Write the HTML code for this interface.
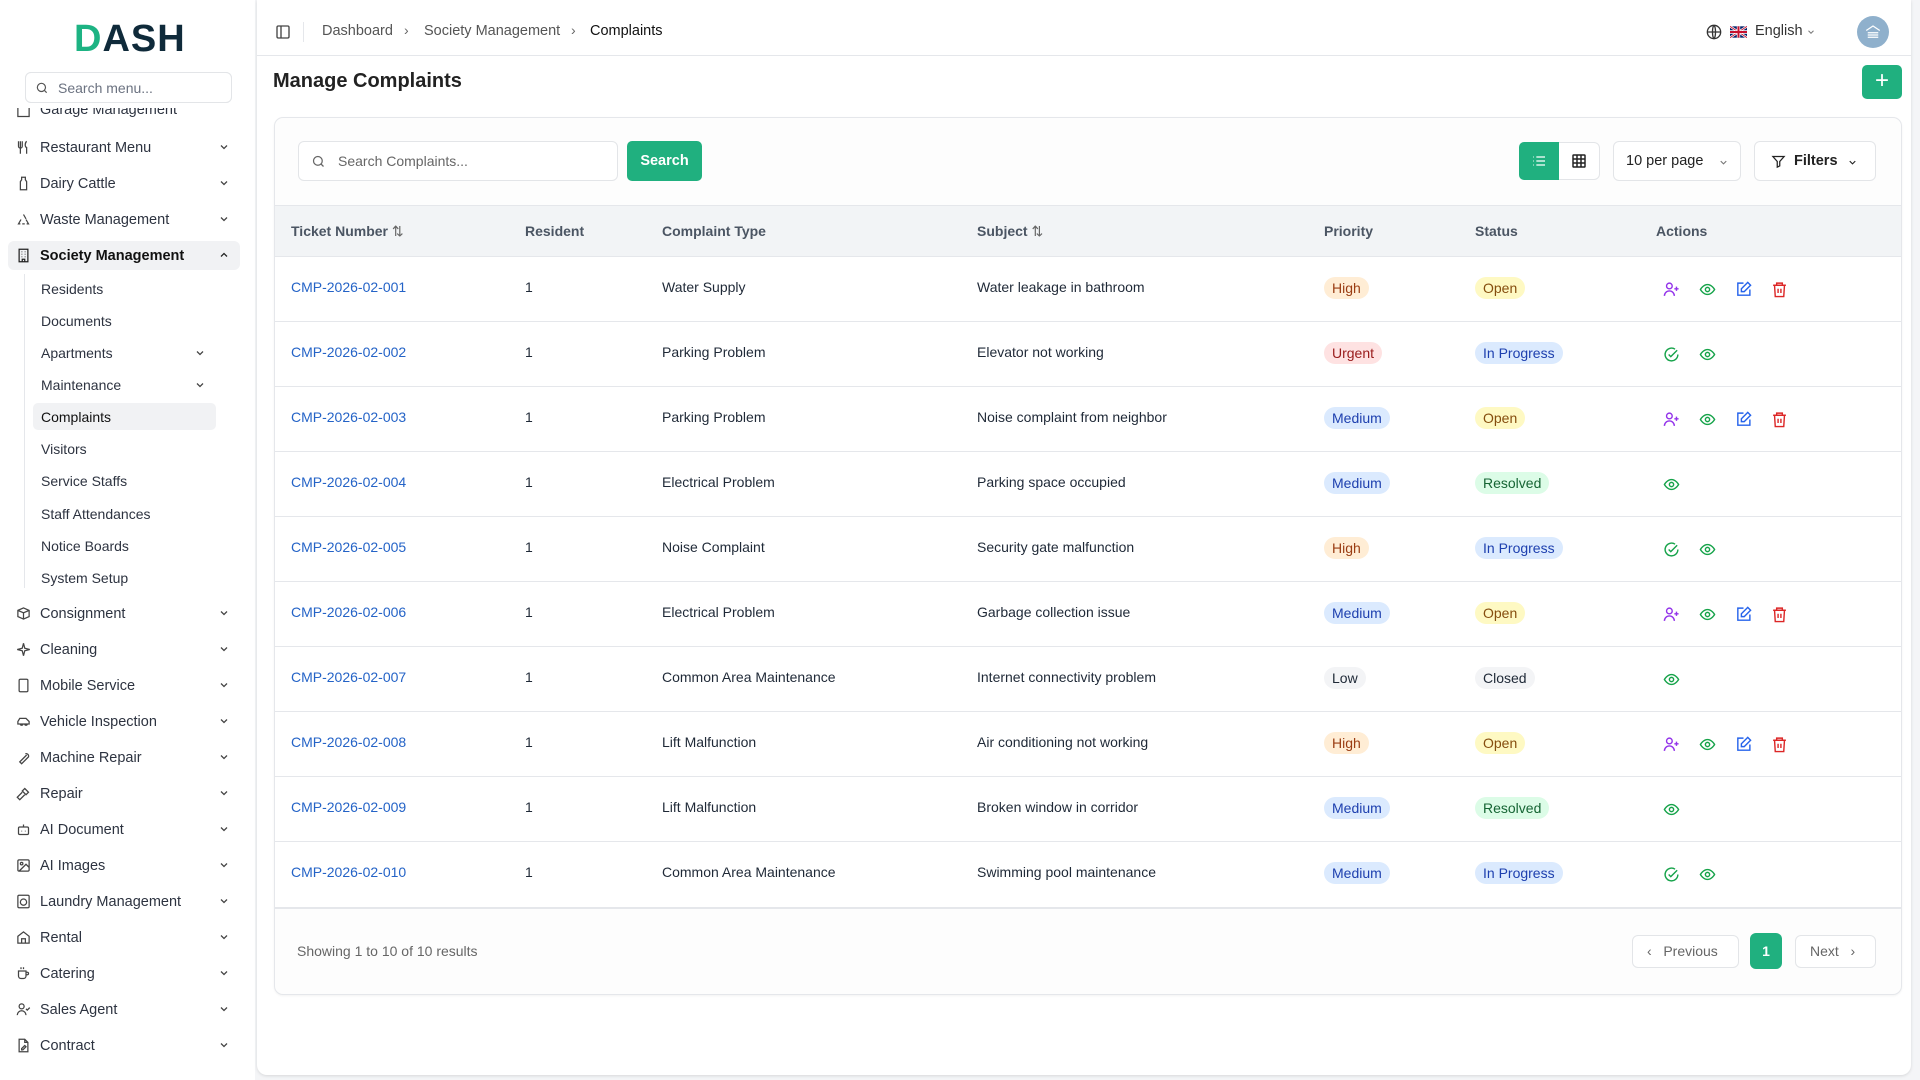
<!DOCTYPE html>
<html><head><meta charset="utf-8">
<style>
*{box-sizing:border-box;margin:0;padding:0}
body{width:1920px;height:1080px;overflow:hidden;background:#f4f5f7;font-family:"Liberation Sans",sans-serif;color:#1f2937;position:relative;font-size:14px}
.abs{position:absolute}
#side{left:0;top:0;width:255px;height:1080px;background:#fff}
.logo{left:74px;top:18px;font-size:38px;font-weight:700;letter-spacing:1px;color:#0f2a3a}
.logo span{color:#1db383}
.msearch{left:25px;top:72px;width:207px;height:31px;border:1px solid #e3e5e8;border-radius:6px;background:#fff}
.msearch .t{position:absolute;left:32px;top:7px;color:#6b7280;font-size:14px}
.item{position:absolute;left:0;width:240px;height:28px;font-size:14.5px;color:#2d3340}
.item .ic{position:absolute;left:16px;top:6px;width:15px;height:15px}
.item .tx{position:absolute;left:40px;top:6px}
.item .ch{position:absolute;left:218px;top:7px;width:12px;height:12px}
.sub{position:absolute;left:41px;font-size:14px;color:#2d3340}
#main{left:257px;top:0;width:1654px;height:1075px;background:#fff;border-radius:0 0 10px 10px;box-shadow:0 1px 3px rgba(0,0,0,.12)}
.hdr{left:257px;top:55px;width:1654px;height:1px;background:#e5e7eb}
.card{left:274px;top:117px;width:1628px;height:878px;border:1px solid #e5e7eb;border-radius:9px;background:#fdfdfd;box-shadow:0 1px 2px rgba(0,0,0,.05)}
.btn{position:absolute;border:1px solid #e3e5e8;border-radius:6px;background:#fff}
.th{position:absolute;top:223px;font-weight:700;color:#4b5563;font-size:14px}
.row{position:absolute;left:275px;width:1626px;height:65px;border-top:1px solid #e5e7eb;background:#fff}
.row div{position:absolute;top:22px;font-size:14px}
.link{color:#2463c7}
.bd{padding:3px 8px;border-radius:12px;font-size:14px;top:20px !important}
.hi{background:#ffedd5;color:#9a3c12}.ur{background:#fee2e2;color:#991b1b}.me{background:#dbeafe;color:#1e40af}.lo{background:#f3f4f6;color:#1f2937}
.op{background:#fef9c3;color:#854d0e}.ip{background:#dbeafe;color:#1e40af}.rs{background:#dcfce7;color:#166534}.cl{background:#f3f4f6;color:#1f2937}
.row svg{position:absolute;top:24px}
</style></head><body>
<div id="side" class="abs">
<div class="abs logo"><span>D</span>ASH</div>
<div class="abs msearch"><svg style="position:absolute;left:9px;top:8px" width="14" height="14" viewBox="0 0 24 24" fill="none" stroke="#555" stroke-width="2"><circle cx="11" cy="11" r="7"/><path d="M20 20l-4-4"/></svg><span class="t">Search menu...</span></div>
<div style="position:absolute;left:0;top:104px;width:255px;height:976px;overflow:hidden">
</div>
</div>

<!-- sidebar items -->
<div class="item" style="top:98px;height:20px;overflow:hidden"><svg class="ic" viewBox="0 0 24 24" fill="none" stroke="#444" stroke-width="2"><rect x="3" y="4" width="18" height="16"/></svg><span class="tx" style="top:4px">Garage Management</span></div>
<div class="abs" style="left:0;top:104px;width:255px;height:4px;background:#fff"></div>
<div class="abs msearch" style="top:72px;z-index:2"><svg style="position:absolute;left:9px;top:8px" width="14" height="14" viewBox="0 0 24 24" fill="none" stroke="#555" stroke-width="2"><circle cx="11" cy="11" r="7"/><path d="M20 20l-4-4"/></svg><span class="t">Search menu...</span></div>

<div class="item" style="top:134px"><svg class="ic" viewBox="0 0 24 24" fill="none" stroke="#444" stroke-width="2"><path d="M4 2v8a3 3 0 006 0V2M7 2v20M17 2c-3 3-3 9 0 10v10"/></svg><span class="tx">Restaurant Menu</span><svg class="ch" viewBox="0 0 24 24" fill="none" stroke="#444" stroke-width="2.5"><path d="M6 9l6 6 6-6"/></svg></div>
<div class="item" style="top:170px"><svg class="ic" viewBox="0 0 24 24" fill="none" stroke="#444" stroke-width="2"><path d="M9 2h6v4l2 3v13H7V9l2-3z"/></svg><span class="tx">Dairy Cattle</span><svg class="ch" viewBox="0 0 24 24" fill="none" stroke="#444" stroke-width="2.5"><path d="M6 9l6 6 6-6"/></svg></div>
<div class="item" style="top:206px"><svg class="ic" viewBox="0 0 24 24" fill="none" stroke="#444" stroke-width="2"><path d="M7 19H4l4-7M12 4l4 7M17 19h3l-4-7M10 19h4"/></svg><span class="tx">Waste Management</span><svg class="ch" viewBox="0 0 24 24" fill="none" stroke="#444" stroke-width="2.5"><path d="M6 9l6 6 6-6"/></svg></div>
<div class="abs" style="left:8px;top:241px;width:232px;height:29px;background:#f1f2f4;border-radius:6px"></div>
<div class="item" style="top:242px;font-weight:700;color:#111"><svg class="ic" viewBox="0 0 24 24" fill="none" stroke="#222" stroke-width="2"><rect x="5" y="2" width="14" height="20"/><path d="M9 6h1M14 6h1M9 10h1M14 10h1M9 14h1M14 14h1M10 22v-4h4v4"/></svg><span class="tx">Society Management</span><svg class="ch" viewBox="0 0 24 24" fill="none" stroke="#222" stroke-width="2.5"><path d="M6 15l6-6 6 6"/></svg></div>
<div class="abs" style="left:24px;top:274px;width:1px;height:314px;background:#e5e7eb"></div>
<div class="sub" style="top:281px">Residents</div>
<div class="sub" style="top:313px">Documents</div>
<div class="sub" style="top:345px">Apartments</div><svg class="abs" style="left:194px;top:347px" width="12" height="12" viewBox="0 0 24 24" fill="none" stroke="#444" stroke-width="2.5"><path d="M6 9l6 6 6-6"/></svg>
<div class="sub" style="top:377px">Maintenance</div><svg class="abs" style="left:194px;top:379px" width="12" height="12" viewBox="0 0 24 24" fill="none" stroke="#444" stroke-width="2.5"><path d="M6 9l6 6 6-6"/></svg>
<div class="abs" style="left:33px;top:403px;width:183px;height:27px;background:#f1f2f4;border-radius:5px"></div>
<div class="sub" style="top:409px;color:#111">Complaints</div>
<div class="sub" style="top:441px">Visitors</div>
<div class="sub" style="top:473px">Service Staffs</div>
<div class="sub" style="top:506px">Staff Attendances</div>
<div class="sub" style="top:538px">Notice Boards</div>
<div class="sub" style="top:570px">System Setup</div>

<div class="item" style="top:600px"><svg class="ic" viewBox="0 0 24 24" fill="none" stroke="#444" stroke-width="2"><path d="M3 7l9-4 9 4v10l-9 4-9-4z M3 7l9 4 9-4M12 11v10"/></svg><span class="tx">Consignment</span><svg class="ch" viewBox="0 0 24 24" fill="none" stroke="#444" stroke-width="2.5"><path d="M6 9l6 6 6-6"/></svg></div>
<div class="item" style="top:636px"><svg class="ic" viewBox="0 0 24 24" fill="none" stroke="#444" stroke-width="2"><path d="M12 2l2 8 8 2-8 2-2 8-2-8-8-2 8-2z"/></svg><span class="tx">Cleaning</span><svg class="ch" viewBox="0 0 24 24" fill="none" stroke="#444" stroke-width="2.5"><path d="M6 9l6 6 6-6"/></svg></div>
<div class="item" style="top:672px"><svg class="ic" viewBox="0 0 24 24" fill="none" stroke="#444" stroke-width="2"><rect x="5" y="2" width="14" height="20" rx="2"/></svg><span class="tx">Mobile Service</span><svg class="ch" viewBox="0 0 24 24" fill="none" stroke="#444" stroke-width="2.5"><path d="M6 9l6 6 6-6"/></svg></div>
<div class="item" style="top:708px"><svg class="ic" viewBox="0 0 24 24" fill="none" stroke="#444" stroke-width="2"><path d="M3 16v-4l3-5h10l5 5v4zM7 16a2 2 0 004 0M14 16a2 2 0 004 0"/></svg><span class="tx">Vehicle Inspection</span><svg class="ch" viewBox="0 0 24 24" fill="none" stroke="#444" stroke-width="2.5"><path d="M6 9l6 6 6-6"/></svg></div>
<div class="item" style="top:744px"><svg class="ic" viewBox="0 0 24 24" fill="none" stroke="#444" stroke-width="2"><path d="M15 6a4 4 0 015 5l-11 11-3-3L17 8"/></svg><span class="tx">Machine Repair</span><svg class="ch" viewBox="0 0 24 24" fill="none" stroke="#444" stroke-width="2.5"><path d="M6 9l6 6 6-6"/></svg></div>
<div class="item" style="top:780px"><svg class="ic" viewBox="0 0 24 24" fill="none" stroke="#444" stroke-width="2"><path d="M14 4l6 6-4 4-6-6zM10 10l-8 8 4 4 8-8"/></svg><span class="tx">Repair</span><svg class="ch" viewBox="0 0 24 24" fill="none" stroke="#444" stroke-width="2.5"><path d="M6 9l6 6 6-6"/></svg></div>
<div class="item" style="top:816px"><svg class="ic" viewBox="0 0 24 24" fill="none" stroke="#444" stroke-width="2"><rect x="4" y="8" width="16" height="12" rx="2"/><path d="M12 4v4M9 14v1M15 14v1"/></svg><span class="tx">AI Document</span><svg class="ch" viewBox="0 0 24 24" fill="none" stroke="#444" stroke-width="2.5"><path d="M6 9l6 6 6-6"/></svg></div>
<div class="item" style="top:852px"><svg class="ic" viewBox="0 0 24 24" fill="none" stroke="#444" stroke-width="2"><rect x="3" y="3" width="18" height="18" rx="2"/><circle cx="9" cy="9" r="2"/><path d="M21 15l-5-5L5 21"/></svg><span class="tx">AI Images</span><svg class="ch" viewBox="0 0 24 24" fill="none" stroke="#444" stroke-width="2.5"><path d="M6 9l6 6 6-6"/></svg></div>
<div class="item" style="top:888px"><svg class="ic" viewBox="0 0 24 24" fill="none" stroke="#444" stroke-width="2"><rect x="3" y="2" width="18" height="20" rx="2"/><circle cx="12" cy="13" r="5"/></svg><span class="tx">Laundry Management</span><svg class="ch" viewBox="0 0 24 24" fill="none" stroke="#444" stroke-width="2.5"><path d="M6 9l6 6 6-6"/></svg></div>
<div class="item" style="top:924px"><svg class="ic" viewBox="0 0 24 24" fill="none" stroke="#444" stroke-width="2"><path d="M3 10l9-7 9 7v11H3zM9 21v-7h6v7"/></svg><span class="tx">Rental</span><svg class="ch" viewBox="0 0 24 24" fill="none" stroke="#444" stroke-width="2.5"><path d="M6 9l6 6 6-6"/></svg></div>
<div class="item" style="top:960px"><svg class="ic" viewBox="0 0 24 24" fill="none" stroke="#444" stroke-width="2"><path d="M4 8h12v8a4 4 0 01-4 4H8a4 4 0 01-4-4zM16 10h2a2 2 0 010 4h-2M8 2v3M12 2v3"/></svg><span class="tx">Catering</span><svg class="ch" viewBox="0 0 24 24" fill="none" stroke="#444" stroke-width="2.5"><path d="M6 9l6 6 6-6"/></svg></div>
<div class="item" style="top:996px"><svg class="ic" viewBox="0 0 24 24" fill="none" stroke="#444" stroke-width="2"><circle cx="9" cy="7" r="4"/><path d="M2 21a7 7 0 0114 0M16 11l2 2 4-4"/></svg><span class="tx">Sales Agent</span><svg class="ch" viewBox="0 0 24 24" fill="none" stroke="#444" stroke-width="2.5"><path d="M6 9l6 6 6-6"/></svg></div>
<div class="item" style="top:1032px"><svg class="ic" viewBox="0 0 24 24" fill="none" stroke="#444" stroke-width="2"><path d="M14 2H5v20h14V7zM14 2v5h5M9 17l5-5 2 2-5 5H9z"/></svg><span class="tx">Contract</span><svg class="ch" viewBox="0 0 24 24" fill="none" stroke="#444" stroke-width="2.5"><path d="M6 9l6 6 6-6"/></svg></div>

<div id="main" class="abs"></div>
<div class="abs hdr"></div>
<svg class="abs" style="left:275px;top:24px" width="16" height="16" viewBox="0 0 24 24" fill="none" stroke="#444" stroke-width="2"><rect x="3" y="3" width="18" height="18" rx="2"/><path d="M9 3v18"/></svg>
<div class="abs" style="left:303px;top:22px;width:1px;height:20px;background:#e5e7eb"></div>
<div class="abs" style="left:322px;top:23px;font-size:14.5px;color:#555">Dashboard</div>
<div class="abs" style="left:404px;top:22px;font-size:14px;color:#666">›</div>
<div class="abs" style="left:424px;top:23px;font-size:14.5px;color:#555">Society Management</div>
<div class="abs" style="left:571px;top:22px;font-size:14px;color:#666">›</div>
<div class="abs" style="left:590px;top:23px;font-size:14.5px;color:#111">Complaints</div>
<svg class="abs" style="left:1706px;top:24px" width="16" height="16" viewBox="0 0 24 24" fill="none" stroke="#333" stroke-width="2"><circle cx="12" cy="12" r="10"/><path d="M2 12h20M12 2c3 3 3 17 0 20M12 2c-3 3-3 17 0 20"/></svg>
<svg class="abs" style="left:1730px;top:26px" width="17" height="12" viewBox="0 0 60 40"><rect width="60" height="40" fill="#012169"/><path d="M0 0l60 40M60 0L0 40" stroke="#fff" stroke-width="8"/><path d="M0 0l60 40M60 0L0 40" stroke="#c8102e" stroke-width="3"/><path d="M30 0v40M0 20h60" stroke="#fff" stroke-width="12"/><path d="M30 0v40M0 20h60" stroke="#c8102e" stroke-width="7"/></svg>
<div class="abs" style="left:1755px;top:23px;font-size:14.5px;color:#333">English</div>
<svg class="abs" style="left:1806px;top:27px" width="10" height="10" viewBox="0 0 24 24" fill="none" stroke="#777" stroke-width="2.5"><path d="M6 9l6 6 6-6"/></svg>
<div class="abs" style="left:1857px;top:16px;width:32px;height:32px;border-radius:50%;background:#8fb0cc"></div>
<svg class="abs" style="left:1864px;top:23px" width="18" height="18" viewBox="0 0 24 24" fill="none" stroke="#fff" stroke-width="1.6"><path d="M3 10l9-6 9 6M5 13h14M5 16h14M5 19h14"/></svg>

<div class="abs" style="left:273px;top:70px;font-size:20px;font-weight:700;color:#222">Manage Complaints</div>
<div class="abs" style="left:1862px;top:65px;width:40px;height:34px;background:#20b07f;border-radius:5px;color:#fff;font-size:24px;text-align:center;line-height:32px">+</div>

<div class="abs card"></div>
<div class="btn" style="left:298px;top:141px;width:320px;height:40px"><svg style="position:absolute;left:12px;top:12px" width="15" height="15" viewBox="0 0 24 24" fill="none" stroke="#666" stroke-width="2"><circle cx="11" cy="11" r="7"/><path d="M20 20l-4-4"/></svg><span style="position:absolute;left:39px;top:11px;color:#666;font-size:14px">Search Complaints...</span></div>
<div class="abs" style="left:627px;top:141px;width:75px;height:40px;background:#20b07f;border-radius:5px;color:#fff;font-weight:700;font-size:14.5px;text-align:center;line-height:40px">Search</div>
<div class="btn" style="left:1519px;top:142px;width:81px;height:38px"></div>
<div class="abs" style="left:1519px;top:142px;width:40px;height:38px;background:#20b07f;border-radius:5px 0 0 5px"></div>
<svg class="abs" style="left:1531px;top:153px" width="16" height="16" viewBox="0 0 24 24" fill="none" stroke="#fff" stroke-width="2"><path d="M8 6h13M8 12h13M8 18h13M3 6h1M3 12h1M3 18h1"/></svg>
<svg class="abs" style="left:1571px;top:153px" width="16" height="16" viewBox="0 0 24 24" fill="none" stroke="#222" stroke-width="2.2"><rect x="3" y="3" width="18" height="18" rx="1"/><path d="M3 9h18M3 15h18M9 3v18M15 3v18"/></svg>
<div class="btn" style="left:1613px;top:141px;width:128px;height:40px"><span style="position:absolute;left:12px;top:11px;font-size:14.5px;color:#222">10 per page</span><svg style="position:absolute;left:104px;top:15px" width="11" height="11" viewBox="0 0 24 24" fill="none" stroke="#777" stroke-width="2.5"><path d="M6 9l6 6 6-6"/></svg></div>
<div class="btn" style="left:1754px;top:141px;width:122px;height:40px"><svg style="position:absolute;left:16px;top:12px" width="15" height="15" viewBox="0 0 24 24" fill="none" stroke="#222" stroke-width="2"><path d="M3 4h18l-7 8v7l-4 2v-9z"/></svg><span style="position:absolute;left:39px;top:11px;font-size:14.5px;font-weight:700;color:#222">Filters</span><svg style="position:absolute;left:92px;top:15px" width="11" height="11" viewBox="0 0 24 24" fill="none" stroke="#222" stroke-width="2.5"><path d="M6 9l6 6 6-6"/></svg></div>

<div class="abs" style="left:275px;top:205px;width:1626px;height:51px;background:#f2f4f6;border-top:1px solid #e5e7eb"></div>
<div class="th" style="left:291px">Ticket Number <span style="font-weight:400;color:#666">⇅</span></div>
<div class="th" style="left:525px">Resident</div>
<div class="th" style="left:662px">Complaint Type</div>
<div class="th" style="left:977px">Subject <span style="font-weight:400;color:#666">⇅</span></div>
<div class="th" style="left:1324px">Priority</div>
<div class="th" style="left:1475px">Status</div>
<div class="th" style="left:1656px">Actions</div>

<!-- rows -->
<div class="row" style="top:256px"><div class="link" style="left:16px">CMP-2026-02-001</div><div style="left:250px">1</div><div style="left:387px">Water Supply</div><div style="left:702px">Water leakage in bathroom</div><div class="bd hi" style="left:1049px">High</div><div class="bd op" style="left:1200px">Open</div>
<svg style="left:1388px" width="17" height="17" viewBox="0 0 24 24" fill="none" stroke="#9333ea" stroke-width="2"><circle cx="9" cy="7" r="4"/><path d="M2 21a7 7 0 0114 0M19 8v6M16 11h6"/></svg><svg style="left:1424px" width="17" height="17" viewBox="0 0 24 24" fill="none" stroke="#16a34a" stroke-width="2"><path d="M2 12s4-7 10-7 10 7 10 7-4 7-10 7S2 12 2 12z"/><circle cx="12" cy="12" r="3"/></svg><svg style="left:1460px" width="17" height="17" viewBox="0 0 24 24" fill="none" stroke="#2563eb" stroke-width="2"><path d="M12 3H4v17h17v-8"/><path d="M18 2l4 4-9 9H9v-4z"/></svg><svg style="left:1496px" width="17" height="17" viewBox="0 0 24 24" fill="none" stroke="#dc2626" stroke-width="2"><path d="M3 6h18M8 6V3h8v3M5 6l1 16h12l1-16M10 11v6M14 11v6"/></svg></div>

<div class="row" style="top:321px"><div class="link" style="left:16px">CMP-2026-02-002</div><div style="left:250px">1</div><div style="left:387px">Parking Problem</div><div style="left:702px">Elevator not working</div><div class="bd ur" style="left:1049px">Urgent</div><div class="bd ip" style="left:1200px">In Progress</div>
<svg style="left:1388px" width="17" height="17" viewBox="0 0 24 24" fill="none" stroke="#16a34a" stroke-width="2"><path d="M21 12a9 9 0 11-4-7.5"/><path d="M8 12l3 3 9-9"/></svg><svg style="left:1424px" width="17" height="17" viewBox="0 0 24 24" fill="none" stroke="#16a34a" stroke-width="2"><path d="M2 12s4-7 10-7 10 7 10 7-4 7-10 7S2 12 2 12z"/><circle cx="12" cy="12" r="3"/></svg></div>

<div class="row" style="top:386px"><div class="link" style="left:16px">CMP-2026-02-003</div><div style="left:250px">1</div><div style="left:387px">Parking Problem</div><div style="left:702px">Noise complaint from neighbor</div><div class="bd me" style="left:1049px">Medium</div><div class="bd op" style="left:1200px">Open</div>
<svg style="left:1388px" width="17" height="17" viewBox="0 0 24 24" fill="none" stroke="#9333ea" stroke-width="2"><circle cx="9" cy="7" r="4"/><path d="M2 21a7 7 0 0114 0M19 8v6M16 11h6"/></svg><svg style="left:1424px" width="17" height="17" viewBox="0 0 24 24" fill="none" stroke="#16a34a" stroke-width="2"><path d="M2 12s4-7 10-7 10 7 10 7-4 7-10 7S2 12 2 12z"/><circle cx="12" cy="12" r="3"/></svg><svg style="left:1460px" width="17" height="17" viewBox="0 0 24 24" fill="none" stroke="#2563eb" stroke-width="2"><path d="M12 3H4v17h17v-8"/><path d="M18 2l4 4-9 9H9v-4z"/></svg><svg style="left:1496px" width="17" height="17" viewBox="0 0 24 24" fill="none" stroke="#dc2626" stroke-width="2"><path d="M3 6h18M8 6V3h8v3M5 6l1 16h12l1-16M10 11v6M14 11v6"/></svg></div>

<div class="row" style="top:451px"><div class="link" style="left:16px">CMP-2026-02-004</div><div style="left:250px">1</div><div style="left:387px">Electrical Problem</div><div style="left:702px">Parking space occupied</div><div class="bd me" style="left:1049px">Medium</div><div class="bd rs" style="left:1200px">Resolved</div>
<svg style="left:1388px" width="17" height="17" viewBox="0 0 24 24" fill="none" stroke="#16a34a" stroke-width="2"><path d="M2 12s4-7 10-7 10 7 10 7-4 7-10 7S2 12 2 12z"/><circle cx="12" cy="12" r="3"/></svg></div>

<div class="row" style="top:516px"><div class="link" style="left:16px">CMP-2026-02-005</div><div style="left:250px">1</div><div style="left:387px">Noise Complaint</div><div style="left:702px">Security gate malfunction</div><div class="bd hi" style="left:1049px">High</div><div class="bd ip" style="left:1200px">In Progress</div>
<svg style="left:1388px" width="17" height="17" viewBox="0 0 24 24" fill="none" stroke="#16a34a" stroke-width="2"><path d="M21 12a9 9 0 11-4-7.5"/><path d="M8 12l3 3 9-9"/></svg><svg style="left:1424px" width="17" height="17" viewBox="0 0 24 24" fill="none" stroke="#16a34a" stroke-width="2"><path d="M2 12s4-7 10-7 10 7 10 7-4 7-10 7S2 12 2 12z"/><circle cx="12" cy="12" r="3"/></svg></div>

<div class="row" style="top:581px"><div class="link" style="left:16px">CMP-2026-02-006</div><div style="left:250px">1</div><div style="left:387px">Electrical Problem</div><div style="left:702px">Garbage collection issue</div><div class="bd me" style="left:1049px">Medium</div><div class="bd op" style="left:1200px">Open</div>
<svg style="left:1388px" width="17" height="17" viewBox="0 0 24 24" fill="none" stroke="#9333ea" stroke-width="2"><circle cx="9" cy="7" r="4"/><path d="M2 21a7 7 0 0114 0M19 8v6M16 11h6"/></svg><svg style="left:1424px" width="17" height="17" viewBox="0 0 24 24" fill="none" stroke="#16a34a" stroke-width="2"><path d="M2 12s4-7 10-7 10 7 10 7-4 7-10 7S2 12 2 12z"/><circle cx="12" cy="12" r="3"/></svg><svg style="left:1460px" width="17" height="17" viewBox="0 0 24 24" fill="none" stroke="#2563eb" stroke-width="2"><path d="M12 3H4v17h17v-8"/><path d="M18 2l4 4-9 9H9v-4z"/></svg><svg style="left:1496px" width="17" height="17" viewBox="0 0 24 24" fill="none" stroke="#dc2626" stroke-width="2"><path d="M3 6h18M8 6V3h8v3M5 6l1 16h12l1-16M10 11v6M14 11v6"/></svg></div>

<div class="row" style="top:646px"><div class="link" style="left:16px">CMP-2026-02-007</div><div style="left:250px">1</div><div style="left:387px">Common Area Maintenance</div><div style="left:702px">Internet connectivity problem</div><div class="bd lo" style="left:1049px">Low</div><div class="bd cl" style="left:1200px">Closed</div>
<svg style="left:1388px" width="17" height="17" viewBox="0 0 24 24" fill="none" stroke="#16a34a" stroke-width="2"><path d="M2 12s4-7 10-7 10 7 10 7-4 7-10 7S2 12 2 12z"/><circle cx="12" cy="12" r="3"/></svg></div>

<div class="row" style="top:711px"><div class="link" style="left:16px">CMP-2026-02-008</div><div style="left:250px">1</div><div style="left:387px">Lift Malfunction</div><div style="left:702px">Air conditioning not working</div><div class="bd hi" style="left:1049px">High</div><div class="bd op" style="left:1200px">Open</div>
<svg style="left:1388px" width="17" height="17" viewBox="0 0 24 24" fill="none" stroke="#9333ea" stroke-width="2"><circle cx="9" cy="7" r="4"/><path d="M2 21a7 7 0 0114 0M19 8v6M16 11h6"/></svg><svg style="left:1424px" width="17" height="17" viewBox="0 0 24 24" fill="none" stroke="#16a34a" stroke-width="2"><path d="M2 12s4-7 10-7 10 7 10 7-4 7-10 7S2 12 2 12z"/><circle cx="12" cy="12" r="3"/></svg><svg style="left:1460px" width="17" height="17" viewBox="0 0 24 24" fill="none" stroke="#2563eb" stroke-width="2"><path d="M12 3H4v17h17v-8"/><path d="M18 2l4 4-9 9H9v-4z"/></svg><svg style="left:1496px" width="17" height="17" viewBox="0 0 24 24" fill="none" stroke="#dc2626" stroke-width="2"><path d="M3 6h18M8 6V3h8v3M5 6l1 16h12l1-16M10 11v6M14 11v6"/></svg></div>

<div class="row" style="top:776px"><div class="link" style="left:16px">CMP-2026-02-009</div><div style="left:250px">1</div><div style="left:387px">Lift Malfunction</div><div style="left:702px">Broken window in corridor</div><div class="bd me" style="left:1049px">Medium</div><div class="bd rs" style="left:1200px">Resolved</div>
<svg style="left:1388px" width="17" height="17" viewBox="0 0 24 24" fill="none" stroke="#16a34a" stroke-width="2"><path d="M2 12s4-7 10-7 10 7 10 7-4 7-10 7S2 12 2 12z"/><circle cx="12" cy="12" r="3"/></svg></div>

<div class="row" style="top:841px;border-bottom:2px solid #e5e7eb;height:68px"><div class="link" style="left:16px">CMP-2026-02-010</div><div style="left:250px">1</div><div style="left:387px">Common Area Maintenance</div><div style="left:702px">Swimming pool maintenance</div><div class="bd me" style="left:1049px">Medium</div><div class="bd ip" style="left:1200px">In Progress</div>
<svg style="left:1388px" width="17" height="17" viewBox="0 0 24 24" fill="none" stroke="#16a34a" stroke-width="2"><path d="M21 12a9 9 0 11-4-7.5"/><path d="M8 12l3 3 9-9"/></svg><svg style="left:1424px" width="17" height="17" viewBox="0 0 24 24" fill="none" stroke="#16a34a" stroke-width="2"><path d="M2 12s4-7 10-7 10 7 10 7-4 7-10 7S2 12 2 12z"/><circle cx="12" cy="12" r="3"/></svg></div>

<div class="abs" style="left:297px;top:943px;font-size:14px;color:#666">Showing 1 to 10 of 10 results</div>
<div class="btn" style="left:1632px;top:935px;width:107px;height:33px"><span style="position:absolute;left:14px;top:7px;color:#666;font-size:14px">‹&nbsp;&nbsp;&nbsp;Previous</span></div>
<div class="abs" style="left:1750px;top:933px;width:32px;height:36px;background:#20b07f;border-radius:6px;color:#fff;font-weight:700;text-align:center;line-height:36px;font-size:14px">1</div>
<div class="btn" style="left:1795px;top:935px;width:81px;height:33px"><span style="position:absolute;left:14px;top:7px;color:#666;font-size:14px">Next&nbsp;&nbsp;&nbsp;›</span></div>
</body></html>
